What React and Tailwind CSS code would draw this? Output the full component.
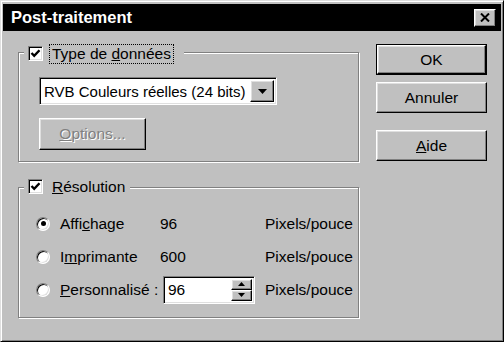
import React from "react";

const raised =
  "bg-[#c0c0c0] border border-t-white border-l-white border-r-black border-b-black shadow-[inset_-1px_-1px_0_#808080,inset_1px_1px_0_#dfdfdf]";
const sunken =
  "bg-white border border-t-[#808080] border-l-[#808080] border-r-white border-b-white shadow-[inset_1px_1px_0_#000,inset_-1px_-1px_0_#dfdfdf]";
const etched =
  "relative border border-[#808080] shadow-[inset_1px_1px_0_#fff,1px_1px_0_#fff]";

function CheckBox() {
  return (
    <div className={`${sunken} w-[15px] h-[15px] flex items-center justify-center`}>
      <svg width="11" height="11" viewBox="0 0 11 11">
        <path d="M1.5 5 L4.2 7.8 L9.5 2.2" fill="none" stroke="#000" strokeWidth="2.4" />
      </svg>
    </div>
  );
}

function Radio({ checked }) {
  return (
    <div className="w-[14px] h-[14px] rounded-full bg-white border border-t-[#808080] border-l-[#808080] border-r-white border-b-white shadow-[inset_1px_1px_0_#000,inset_-1px_-1px_0_#dfdfdf] flex items-center justify-center">
      {checked && <div className="w-[5px] h-[5px] rounded-full bg-black" />}
    </div>
  );
}

function Tri({ up }) {
  return (
    <svg width="7" height="4" viewBox="0 0 7 4">
      <path d={up ? "M3.5 0 L7 4 L0 4 Z" : "M0 0 L7 0 L3.5 4 Z"} fill="#000" />
    </svg>
  );
}

export default function App() {
  return (
    <div className='w-[504px] h-[342px] bg-[#c0c0c0] border border-t-[#dfdfdf] border-l-[#dfdfdf] border-r-black border-b-black shadow-[inset_1px_1px_0_#fff,inset_-1px_-1px_0_#808080] px-[2px] pt-[3px] font-["Liberation_Sans",Arial,sans-serif] text-[15.5px] text-black leading-none'>
      {/* title bar */}
      <div className="h-[27px] bg-black flex items-center justify-between pl-[8px] pr-[5px]">
        <span className="text-white font-bold text-[16.5px]">Post-traitement</span>
        <button className={`${raised} w-[22px] h-[18px] flex items-center justify-center`}>
          <svg width="10" height="9" viewBox="0 0 10 9">
            <path d="M1 0.5 L9 8.5 M9 0.5 L1 8.5" stroke="#000" strokeWidth="2" />
          </svg>
        </button>
      </div>

      <div className="flex pl-[15px] pt-[13px]">
        {/* left column */}
        <div className="flex flex-col w-[341px] pt-[8px]">
          <div className={`${etched} h-[110px] pl-[20px] pt-[24px]`}>
            <div className="absolute -top-[9px] left-[5px] bg-[#c0c0c0] pl-[4px] pr-[10px] flex items-center">
              <CheckBox />
              <span className="ml-[6px] border border-dotted border-black px-[2px] py-[1px]">
                Type de <span className="underline">d</span>onnées
              </span>
            </div>
            <div className={`${sunken} w-[238px] h-[28px] flex items-center justify-between p-[2px]`}>
              <span className="pl-[2px] text-[15px] whitespace-nowrap">RVB Couleurs réelles (24 bits)</span>
              <div className={`${raised} w-[24px] h-full shrink-0 flex items-center justify-center`}>
                <svg width="9" height="5" viewBox="0 0 9 5">
                  <path d="M0 0 L9 0 L4.5 5 Z" fill="#000" />
                </svg>
              </div>
            </div>
            <button className={`${raised} mt-[13px] w-[107px] h-[32px] flex items-center justify-center text-[#808080] [text-shadow:1px_1px_0_#fff]`}>
              <span className="underline">O</span>ptions...
            </button>
          </div>

          <div className={`${etched} mt-[25px] h-[131px] pt-[19px] pl-[17px]`}>
            <div className="absolute -top-[9px] left-[5px] bg-[#c0c0c0] pl-[4px] pr-[5px] flex items-center">
              <CheckBox />
              <span className="ml-[9px]">
                <span className="underline">R</span>ésolution
              </span>
            </div>
            <div className="flex items-center h-[33px]">
              <Radio checked />
              <span className="ml-[10px] w-[100px]">
                Affi<span className="underline">c</span>hage
              </span>
              <span className="w-[105px]">96</span>
              <span>Pixels/pouce</span>
            </div>
            <div className="flex items-center h-[33px]">
              <Radio />
              <span className="ml-[10px] w-[100px]">
                I<span className="underline">m</span>primante
              </span>
              <span className="w-[105px]">600</span>
              <span>Pixels/pouce</span>
            </div>
            <div className="flex items-center h-[33px]">
              <Radio />
              <span className="ml-[10px] w-[100px] whitespace-nowrap">
                <span className="underline">P</span>ersonnalisé :
              </span>
              <div className="w-[105px] pl-[3px]">
                <div className={`${sunken} w-[92px] h-[28px] flex items-center justify-between p-[2px]`}>
                  <span className="pl-[2px]">96</span>
                  <div className="flex flex-col h-full w-[21px]">
                    <div className={`${raised} flex-1 flex items-center justify-center`}>
                      <Tri up />
                    </div>
                    <div className={`${raised} flex-1 flex items-center justify-center`}>
                      <Tri />
                    </div>
                  </div>
                </div>
              </div>
              <span>Pixels/pouce</span>
            </div>
          </div>
        </div>

        {/* right column */}
        <div className="flex flex-col ml-[17px] w-[111px]">
          <div className="border border-black">
            <button className={`${raised} w-full h-[29px] flex items-center justify-center`}>OK</button>
          </div>
          <button className={`${raised} mt-[7px] w-full h-[31px] flex items-center justify-center`}>Annuler</button>
          <button className={`${raised} mt-[17px] w-full h-[31px] flex items-center justify-center`}>
            <span className="underline">A</span>ide
          </button>
        </div>
      </div>
    </div>
  );
}
